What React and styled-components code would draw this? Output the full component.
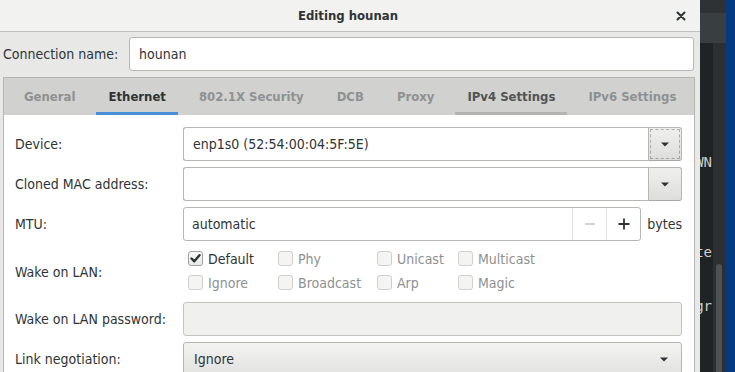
import React from 'react'
import styled, { createGlobalStyle } from 'styled-components'

const GlobalStyle = createGlobalStyle`
  html, body {
    margin: 0;
    padding: 0;
  }
  body {
    width: 735px;
    height: 372px;
    overflow: hidden;
    background: #222526;
    font-family: "DejaVu Sans Condensed", "DejaVu Sans", sans-serif;
    font-stretch: condensed;
    font-size: 14px;
    color: #2e3436;
  }
`

const tabs = ['General', 'Ethernet', '802.1X Security', 'DCB', 'Proxy', 'IPv4 Settings', 'IPv6 Settings']

const wakeOptions = [
  { label: 'Default', checked: true },
  { label: 'Phy' },
  { label: 'Unicast' },
  { label: 'Multicast' },
  { label: 'Ignore' },
  { label: 'Broadcast' },
  { label: 'Arp' },
  { label: 'Magic' },
]

// terminal behind the dialog, only the tail of a few lines shows
const termLines = ['', '', '', '', '', '', 'DOWN', '', '', '', '', 'state', '', '', 'qdisc pfifo_fast gr']

function Arrow() {
  return (
    <svg width="8" height="5" viewBox="0 0 8 5">
      <path d="M0 0.5 L8 0.5 L4 4.5 Z" fill="#2e3436" />
    </svg>
  )
}

function CheckBox({ checked }) {
  return (
    <Box checked={checked}>
      {checked && (
        <svg width="11" height="11" viewBox="0 0 11 11">
          <path d="M1.5 5.5 L4.3 8.3 L9.5 2.2" fill="none" stroke="#2e3436" strokeWidth="2.4" strokeLinecap="round" strokeLinejoin="round" />
        </svg>
      )}
    </Box>
  )
}

function App() {
  return (
    <>
      <GlobalStyle />
      <Desktop>
        <Dialog>
          <TitleBar>
            <span />
            <Title>Editing hounan</Title>
            <CloseButton>
              <svg width="12" height="12" viewBox="0 0 12 12">
                <path d="M2.5 2.5 L9.5 9.5 M9.5 2.5 L2.5 9.5" stroke="#2e3436" strokeWidth="2" strokeLinecap="round" />
              </svg>
            </CloseButton>
          </TitleBar>

          <NameRow>
            <Label>Connection name:</Label>
            <Entry>hounan</Entry>
          </NameRow>

          <Notebook>
            <TabStrip>
              {tabs.map(t => (
                <Tab key={t} active={t === 'Ethernet'} hover={t === 'IPv4 Settings'}>{t}</Tab>
              ))}
            </TabStrip>

            <Page>
              <Label>Device:</Label>
              <Combo>
                <ComboEntry>enp1s0 (52:54:00:04:5F:5E)</ComboEntry>
                <ComboButton focused><Arrow /></ComboButton>
              </Combo>

              <Label>Cloned MAC address:</Label>
              <Combo>
                <ComboEntry />
                <ComboButton><Arrow /></ComboButton>
              </Combo>

              <Label>MTU:</Label>
              <MtuRow>
                <Spin>
                  <SpinText>automatic</SpinText>
                  <SpinButton>
                    <svg width="12" height="12" viewBox="0 0 12 12">
                      <path d="M1 6 H11" stroke="#c7c9c9" strokeWidth="1.6" />
                    </svg>
                  </SpinButton>
                  <SpinButton>
                    <svg width="12" height="12" viewBox="0 0 12 12">
                      <path d="M0.5 6 H11.5 M6 0.5 V11.5" stroke="#2e3436" strokeWidth="1.8" />
                    </svg>
                  </SpinButton>
                </Spin>
                <span>bytes</span>
              </MtuRow>

              <Label>Wake on LAN:</Label>
              <CheckGrid>
                {wakeOptions.map(o => (
                  <CheckItem key={o.label} disabled={!o.checked}>
                    <CheckBox checked={o.checked} />
                    {o.label}
                  </CheckItem>
                ))}
              </CheckGrid>

              <Label>Wake on LAN password:</Label>
              <Entry disabled />

              <Label>Link negotiation:</Label>
              <DropButton>
                <span>Ignore</span>
                <Arrow />
              </DropButton>
            </Page>
          </Notebook>
        </Dialog>

        <Terminal>
          <TermWindow>
            <TermHeader />
            <TermBody>
              <TermText>
                {termLines.map((l, i) => (
                  <TermLine key={i}><span>{l}</span></TermLine>
                ))}
              </TermText>
              <ScrollTrack>
                <ScrollThumb />
              </ScrollTrack>
            </TermBody>
          </TermWindow>
          <DesktopEdge />
        </Terminal>
      </Desktop>
    </>
  )
}

export default App

const Desktop = styled.div`
  display: flex;
  height: 372px;
  overflow: hidden;
`

const Dialog = styled.div`
  width: 700px;
  flex: none;
  display: flex;
  flex-direction: column;
  background: #e8e8e7;
`

const TitleBar = styled.div`
  height: 31px;
  flex: none;
  display: grid;
  grid-template-columns: 1fr auto 1fr;
  align-items: center;
  border-bottom: 1px solid #c0c0bd;
  background: #f2f2f1;
`

const Title = styled.div`
  font-size: 13px;
  font-weight: bold;
  padding-right: 4px;
`

const CloseButton = styled.div`
  justify-self: end;
  display: flex;
  align-items: center;
  justify-content: center;
  width: 24px;
  height: 24px;
  margin-right: 7px;
`

const NameRow = styled.div`
  display: grid;
  grid-template-columns: 114px 1fr;
  column-gap: 12px;
  align-items: center;
  padding: 5px 6px 0 3px;
`

const Label = styled.div`
  color: #2e3436;
  white-space: nowrap;
`

const Entry = styled.div`
  box-sizing: border-box;
  height: 34px;
  display: flex;
  align-items: center;
  padding: 0 9px;
  border: 1px solid #b6b6b3;
  border-radius: 3px;
  background: ${props => props.disabled ? '#f0f0ef' : '#ffffff'};
  border-color: ${props => props.disabled ? '#c4c4c1' : '#b6b6b3'};
`

const Notebook = styled.div`
  flex: 1;
  margin: 6px 5px 0 3px;
  border: 1px solid #b6b6b3;
  border-bottom: none;
  background: #ffffff;
  display: flex;
  flex-direction: column;
`

const TabStrip = styled.div`
  height: 37px;
  display: flex;
  gap: 9px;
  padding-left: 8px;
  background: #d1d1cf;
`

const Tab = styled.div`
  box-sizing: border-box;
  display: flex;
  align-items: center;
  padding: 0 12px;
  padding-top: 2px;
  font-size: 13px;
  font-weight: bold;
  white-space: nowrap;
  color: ${props => props.active ? '#2e3436' : props.hover ? '#4f5456' : '#8e9192'};
  border-bottom: 3px solid ${props => props.active ? '#4a90d9' : props.hover ? '#b3b3b1' : 'transparent'};
`

const Page = styled.div`
  display: grid;
  grid-template-columns: 156px 1fr;
  column-gap: 12px;
  row-gap: 6px;
  align-items: center;
  padding: 12px 12px 0 11px;
`

const Combo = styled.div`
  display: flex;
  height: 34px;
`

const ComboEntry = styled.div`
  flex: 1;
  box-sizing: border-box;
  display: flex;
  align-items: center;
  padding: 0 9px;
  border: 1px solid #b6b6b3;
  border-right: none;
  border-radius: 3px 0 0 3px;
  background: #ffffff;
`

const ComboButton = styled.div`
  box-sizing: border-box;
  width: 34px;
  display: flex;
  align-items: center;
  justify-content: center;
  border: 1px solid #b6b6b3;
  border-bottom-color: #a7a7a4;
  border-radius: 0 3px 3px 0;
  background: linear-gradient(to bottom, #efefee, #dddddb);
  outline: ${props => props.focused ? '1px dashed rgba(46, 52, 54, 0.35)' : 'none'};
  outline-offset: -3px;
`

const MtuRow = styled.div`
  display: flex;
  align-items: center;
  gap: 6px;
`

const Spin = styled.div`
  flex: 1;
  box-sizing: border-box;
  height: 34px;
  display: flex;
  border: 1px solid #b6b6b3;
  border-radius: 3px;
  background: #ffffff;
`

const SpinText = styled.div`
  flex: 1;
  display: flex;
  align-items: center;
  padding: 0 8px;
`

const SpinButton = styled.div`
  width: 33px;
  display: flex;
  align-items: center;
  justify-content: center;
  border-left: 1px solid #e3e3e2;
`

const CheckGrid = styled.div`
  display: grid;
  grid-template-columns: 90px 99px 81px auto;
  grid-template-rows: 23px 25px;
  padding-bottom: 1px;
`

const CheckItem = styled.div`
  display: flex;
  align-items: center;
  gap: 5px;
  padding-left: 5px;
  color: ${props => props.disabled ? '#8e9192' : '#2e3436'};
`

const Box = styled.div`
  box-sizing: border-box;
  width: 15px;
  height: 15px;
  display: flex;
  align-items: center;
  justify-content: center;
  border: 1px solid ${props => props.checked ? '#a2a2a0' : '#cfcfcd'};
  border-radius: 3px;
  background: ${props => props.checked ? 'linear-gradient(#fafafa, #e9e9e8)' : '#f4f4f3'};
`

const DropButton = styled.div`
  box-sizing: border-box;
  height: 34px;
  display: flex;
  align-items: center;
  justify-content: space-between;
  padding: 0 13px 0 10px;
  border: 1px solid #b6b6b3;
  border-radius: 3px;
  background: linear-gradient(to bottom, #f3f3f2, #e1e1e0);
`

const Terminal = styled.div`
  flex: 1;
  display: flex;
`

const TermWindow = styled.div`
  width: 26px;
  display: flex;
  flex-direction: column;
`

const TermHeader = styled.div`
  height: 43px;
  flex: none;
  background: linear-gradient(to bottom, #2e3234 0, #2e3234 13px, #393e40 13px);
`

const TermBody = styled.div`
  flex: 1;
  display: flex;
`

const TermText = styled.div`
  width: 13px;
  overflow: hidden;
  padding-top: 2px;
  background: #202324;
  font-family: "DejaVu Sans Mono", monospace;
  font-size: 14px;
  line-height: 18px;
  color: #cdd0d1;
`

const TermLine = styled.div`
  height: 18px;
  display: flex;
  justify-content: flex-end;
  white-space: nowrap;
  padding-right: 1px;
`

const ScrollTrack = styled.div`
  width: 13px;
  background: #2c3032;
`

const ScrollThumb = styled.div`
  width: 6px;
  height: 200px;
  margin: 221px 0 0 3px;
  border-radius: 3px;
  background: #4d5254;
`

const DesktopEdge = styled.div`
  width: 9px;
  background: #043a80;
`
